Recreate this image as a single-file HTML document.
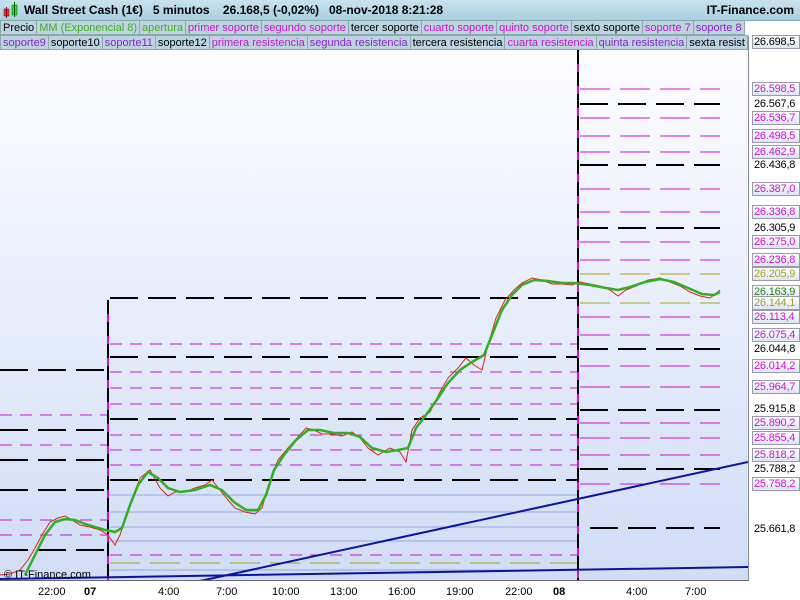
<!DOCTYPE html><html><head><style>
body{margin:0;width:800px;height:600px;overflow:hidden;background:#fff;font-family:"Liberation Sans",sans-serif;position:relative}
#hdr{position:absolute;left:0;top:0;width:800px;height:20px;background:linear-gradient(#c8e2ee,#a9cfe0);border-bottom:1px solid #7aa;font-weight:bold;font-size:12px;line-height:20px}
.row{position:absolute;left:0;height:15px;display:flex;font-size:11px;line-height:15px}
.row span{background:#bcd4e0;border:1px solid #8aa;padding:0 2px;margin-right:-1px;white-space:nowrap}
.m{color:#d010d0}.p{color:#9020d0}.g{color:#40b020}.k{color:#000}
#ax{position:absolute;left:748px;top:36px;width:52px;height:545px;background:#fff;border-left:1px solid #889}
.lb{position:absolute;left:3px;height:14px;width:48px;font-size:11px;line-height:13px;border:1px solid #99a;background:linear-gradient(#fff,#dde6f4);text-align:left;padding-left:1px;box-sizing:border-box;letter-spacing:-0.2px;white-space:nowrap;overflow:hidden}
.xl{position:absolute;top:586px;font-size:11px}
</style></head><body>
<div id="hdr"><span style="position:absolute;left:24px">Wall Street Cash (1€)&nbsp;&nbsp;&nbsp;5 minutos&nbsp;&nbsp;&nbsp;&nbsp;26.168,5 (-0,02%)&nbsp;&nbsp;&nbsp;08-nov-2018 8:21:28</span><span style="position:absolute;right:6px">IT-Finance.com</span>
<svg style="position:absolute;left:3px;top:2px" width="16" height="16"><rect x="1" y="7" width="5" height="7" fill="#e03030" stroke="#800" stroke-width=".5"/><line x1="3.5" y1="5" x2="3.5" y2="16" stroke="#800"/><rect x="9" y="3" width="5" height="10" fill="#30d030" stroke="#060" stroke-width=".5"/><line x1="11.5" y1="0" x2="11.5" y2="15" stroke="#060"/></svg></div>
<div class="row" style="top:20px"><span>Precio</span><span class="g">MM (Exponencial 8)</span><span class="g">apertura</span><span class="m">primer soporte</span><span class="m">segundo soporte</span><span>tercer soporte</span><span class="m">cuarto soporte</span><span class="m">quinto soporte</span><span>sexto soporte</span><span class="m">soporte 7</span><span class="p">soporte 8</span></div>
<div class="row" style="top:35px"><span class="p">soporte9</span><span>soporte10</span><span class="p">soporte11</span><span>soporte12</span><span class="m">primera resistencia</span><span class="p">segunda resistencia</span><span>tercera resistencia</span><span class="m">cuarta resistencia</span><span class="p">quinta resistencia</span><span>sexta resist</span></div>
<svg style="position:absolute;left:0;top:50px" width="748" height="531" viewBox="0 50 748 531">
<defs><linearGradient id="bg" x1="0" y1="0" x2="0" y2="1"><stop offset="0" stop-color="#fdfdff"/><stop offset="1" stop-color="#d0ddf6"/></linearGradient></defs>
<rect x="0" y="50" width="748" height="531" fill="url(#bg)"/>
<g stroke="#d010d0" stroke-width="1" stroke-dasharray="12 8">
<line x1="0" y1="415" x2="108" y2="415"/><line x1="0" y1="445" x2="108" y2="445"/><line x1="0" y1="520" x2="108" y2="520"/><line x1="0" y1="535" x2="108" y2="535"/>
<line x1="110" y1="344" x2="578" y2="344"/><line x1="110" y1="372" x2="578" y2="372"/><line x1="110" y1="388" x2="578" y2="388"/><line x1="110" y1="404" x2="578" y2="404"/><line x1="110" y1="435" x2="578" y2="435"/><line x1="110" y1="450" x2="578" y2="450"/><line x1="110" y1="465" x2="578" y2="465"/><line x1="110" y1="555" x2="578" y2="555"/>
<g stroke-dasharray="30 10"><line x1="580" y1="89" x2="720" y2="89"/><line x1="580" y1="118" x2="720" y2="118"/><line x1="580" y1="136" x2="720" y2="136"/><line x1="580" y1="152" x2="720" y2="152"/><line x1="580" y1="189" x2="720" y2="189"/><line x1="580" y1="212" x2="720" y2="212"/><line x1="580" y1="242" x2="720" y2="242"/><line x1="580" y1="260" x2="720" y2="260"/><line x1="580" y1="317" x2="720" y2="317"/><line x1="580" y1="335" x2="720" y2="335"/><line x1="580" y1="366" x2="720" y2="366"/><line x1="580" y1="387" x2="720" y2="387"/><line x1="580" y1="423" x2="720" y2="423"/><line x1="580" y1="438" x2="720" y2="438"/><line x1="580" y1="455" x2="720" y2="455"/><line x1="580" y1="484" x2="720" y2="484"/></g>
</g>
<g stroke="#a8a020" stroke-dasharray="30 10"><line x1="580" y1="274" x2="720" y2="274"/><line x1="580" y1="303" x2="720" y2="303"/><line x1="110" y1="563" x2="578" y2="563"/></g>
<g stroke="#6070c0" stroke-width=".6"><line x1="110" y1="512" x2="578" y2="512"/><line x1="110" y1="527" x2="578" y2="527"/><line x1="110" y1="541" x2="578" y2="541"/><line x1="110" y1="495" x2="578" y2="495"/><line x1="110" y1="570" x2="578" y2="570"/></g>
<g stroke="#000" stroke-width="2" stroke-dasharray="28 10">
<line x1="0" y1="370" x2="106" y2="370"/><line x1="0" y1="430" x2="106" y2="430"/><line x1="0" y1="460" x2="106" y2="460"/><line x1="0" y1="490" x2="106" y2="490"/><line x1="0" y1="550" x2="106" y2="550"/>
<line x1="110" y1="298" x2="578" y2="298"/><line x1="110" y1="357" x2="578" y2="357"/><line x1="110" y1="419" x2="578" y2="419"/><line x1="110" y1="480" x2="578" y2="480"/>
<line x1="580" y1="104" x2="720" y2="104"/><line x1="580" y1="165" x2="720" y2="165"/><line x1="580" y1="228" x2="720" y2="228"/><line x1="580" y1="349" x2="720" y2="349"/><line x1="580" y1="410" x2="720" y2="410"/><line x1="580" y1="469" x2="720" y2="469"/><line x1="590" y1="528" x2="720" y2="528"/>
</g>
<line x1="108" y1="300" x2="108" y2="580" stroke="#d010d0" stroke-width="2"/>
<line x1="108" y1="300" x2="108" y2="580" stroke="#000" stroke-width="2" stroke-dasharray="14 8"/>
<line x1="578" y1="50" x2="578" y2="580" stroke="#d010d0" stroke-width="2"/>
<line x1="578" y1="50" x2="578" y2="580" stroke="#000" stroke-width="2" stroke-dasharray="14 8"/>
<g stroke="#0a14a0" stroke-width="2"><line x1="200" y1="581" x2="748" y2="462"/><line x1="0" y1="579" x2="748" y2="567"/></g>
<polyline fill="none" stroke="#e02020" stroke-width="1" points="0,575 10,574 20,570 28,560 35,548 42,535 50,522 58,518 65,516 72,520 80,525 90,527 100,530 108,535 115,545 120,535 125,520 132,500 140,478 150,470 160,488 168,496 175,492 185,492 195,488 205,485 212,480 220,490 228,500 235,508 245,512 255,514 262,508 270,480 278,460 288,448 297,438 306,428 314,430 322,434 332,434 342,436 352,432 360,438 368,448 378,455 390,448 400,452 406,462 412,430 420,418 430,412 440,392 448,378 458,368 466,358 474,365 482,370 488,345 496,318 505,300 514,290 522,283 532,278 542,280 552,284 562,284 572,285 580,282 590,284 600,286 610,290 618,296 626,290 636,286 648,280 660,278 670,282 680,286 690,292 700,296 710,298 720,290"/>
<polyline fill="none" stroke="#30b020" stroke-width="2.5" points="25,575 35,555 45,535 55,522 65,519 75,520 85,524 95,527 105,530 115,532 122,528 130,505 138,485 148,472 158,478 168,488 180,492 195,490 210,485 222,490 234,502 246,510 258,510 266,495 274,470 284,455 296,440 308,430 320,430 334,433 348,433 360,437 372,448 386,452 398,450 408,448 416,428 426,415 438,398 448,383 460,370 472,362 484,355 494,330 502,310 512,295 522,285 534,280 548,281 562,283 574,283 590,285 606,288 618,290 630,287 645,282 660,279 674,282 688,288 702,294 714,295 720,292"/>
<text x="4" y="578" font-size="11" font-family="Liberation Sans" fill="#000">© IT-Finance.com</text>
</svg>
<div id="ax">
<div class="lb" style="top:-1px">26.698,5</div>
<div class="lb m" style="top:46px">26.598,5</div>
<div class="lb k" style="top:61px;border-color:transparent;background:none">26.567,6</div>
<div class="lb m" style="top:75px">26.536,7</div>
<div class="lb m" style="top:93px">26.498,5</div>
<div class="lb m" style="top:109px">26.462,9</div>
<div class="lb k" style="top:122px;border-color:transparent;background:none">26.436,8</div>
<div class="lb m" style="top:146px">26.387,0</div>
<div class="lb m" style="top:169px">26.336,8</div>
<div class="lb k" style="top:185px;border-color:transparent;background:none">26.305,9</div>
<div class="lb m" style="top:199px">26.275,0</div>
<div class="lb m" style="top:217px">26.236,8</div>
<div class="lb" style="top:231px;color:#a8a020">26.205,9</div>
<div class="lb" style="top:249px;color:#208020">26.163,9</div>
<div class="lb" style="top:260px;color:#a8a020">26.144,1</div>
<div class="lb m" style="top:274px">26.113,4</div>
<div class="lb m" style="top:292px">26.075,4</div>
<div class="lb k" style="top:306px;border-color:transparent;background:none">26.044,8</div>
<div class="lb m" style="top:323px">26.014,2</div>
<div class="lb m" style="top:344px">25.964,7</div>
<div class="lb k" style="top:366px;border-color:transparent;background:none">25.915,8</div>
<div class="lb m" style="top:380px">25.890,2</div>
<div class="lb m" style="top:395px">25.855,4</div>
<div class="lb m" style="top:412px">25.818,2</div>
<div class="lb k" style="top:426px;border-color:transparent;background:none">25.788,2</div>
<div class="lb m" style="top:441px">25.758,2</div>
<div class="lb k" style="top:486px;border-color:transparent;background:none">25.661,8</div>
</div>
<div style="position:absolute;left:0;top:580px;width:748px;height:1px;background:#667"></div>
<div class="xl" style="left:38px">22:00</div><div class="xl" style="left:84px;font-weight:bold">07</div>
<div class="xl" style="left:158px">4:00</div><div class="xl" style="left:216px">7:00</div><div class="xl" style="left:272px">10:00</div><div class="xl" style="left:330px">13:00</div><div class="xl" style="left:388px">16:00</div><div class="xl" style="left:446px">19:00</div><div class="xl" style="left:505px">22:00</div><div class="xl" style="left:553px;font-weight:bold">08</div><div class="xl" style="left:626px">4:00</div><div class="xl" style="left:685px">7:00</div>
</body></html>
